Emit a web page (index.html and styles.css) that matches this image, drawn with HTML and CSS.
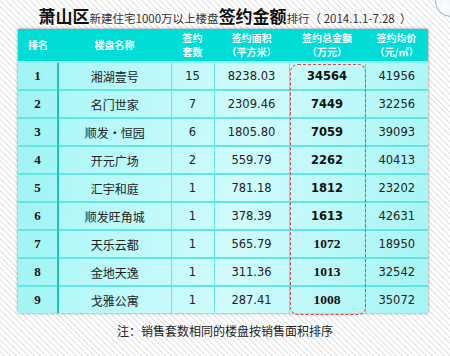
FILE: index.html
```html
<!DOCTYPE html>
<html lang="zh">
<head>
<meta charset="UTF-8" />
<title>萧山区签约金额排行</title>
<link rel="stylesheet" href="styles.css">
</head>
<body>
  <div class="deco"></div>
  <div class="page">
    <h1 class="title">
      <b class="big">萧山区</b><span class="small">新建住宅1000万以上楼盘</span><b class="big">签约金额</b><span class="small">排行（ 2014.1.1-7.28 &nbsp;）</span>
    </h1>

    <div class="board">
      <table class="rank">
        <colgroup>
          <col style="width:40px"><col style="width:113px"><col style="width:43px">
          <col style="width:75px"><col style="width:76px"><col style="width:63px">
        </colgroup>
        <thead>
          <tr>
            <th>排名</th>
            <th>楼盘名称</th>
            <th>签约<br>套数</th>
            <th>签约面积<br>（平方米）</th>
            <th>签约总金额<br>（万元）</th>
            <th>签约均价<br>（元/㎡）</th>
          </tr>
        </thead>
        <tbody>
          <tr><td class="no">1</td><td class="name">湘湖壹号</td><td>15</td><td>8238.03</td><td class="sum">34564</td><td>41956</td></tr>
          <tr><td class="no">2</td><td class="name">名门世家</td><td>7</td><td>2309.46</td><td class="sum">7449</td><td>32256</td></tr>
          <tr><td class="no">3</td><td class="name">顺发·恒园</td><td>6</td><td>1805.80</td><td class="sum">7059</td><td>39093</td></tr>
          <tr><td class="no">4</td><td class="name">开元广场</td><td>2</td><td>559.79</td><td class="sum">2262</td><td>40413</td></tr>
          <tr><td class="no">5</td><td class="name">汇宇和庭</td><td>1</td><td>781.18</td><td class="sum">1812</td><td>23202</td></tr>
          <tr><td class="no">6</td><td class="name">顺发旺角城</td><td>1</td><td>378.39</td><td class="sum">1613</td><td>42631</td></tr>
          <tr><td class="no">7</td><td class="name">天乐云都</td><td>1</td><td>565.79</td><td class="sum serif">1072</td><td>18950</td></tr>
          <tr><td class="no">8</td><td class="name">金地天逸</td><td>1</td><td>311.36</td><td class="sum serif">1013</td><td>32542</td></tr>
          <tr><td class="no">9</td><td class="name">戈雅公寓</td><td>1</td><td>287.41</td><td class="sum serif">1008</td><td>35072</td></tr>
        </tbody>
      </table>
      <div class="mark"></div>
    </div>

    <p class="note">注：销售套数相同的楼盘按销售面积排序</p>
  </div>
</body>
</html>
```

FILE: styles.css
```css
/* 页面底纹 */
body {
  margin: 0;
  width: 450px;
  height: 356px;
  overflow: hidden;
  font-family: "Noto Sans CJK SC", "DejaVu Sans", sans-serif;
  color: #222;
  background: repeating-linear-gradient(45deg, #ffffff 0, #ffffff 2.8px, #e9e9e9 2.8px, #e9e9e9 4.2px);
  position: relative;
}

.deco {
  position: absolute;
  right: -17px;
  top: -15px;
  width: 30px;
  height: 30px;
  border-radius: 50%;
  border: 1px solid #9fb4c8;
  background: radial-gradient(circle at 30% 70%, #ffffff, #cfe2f2);
}

.page {
  display: flex;
  flex-direction: column;
  align-items: center;
}

/* 标题 */
.title {
  display: flex;
  align-items: baseline;
  margin: 0;
  padding-top: 7px;
  height: 22px;
  line-height: 18px;
  font-weight: normal;
  white-space: nowrap;
  color: #111;
}
.title .big {
  font-size: 17px;
  font-weight: 700;
}
.title .small {
  font-size: 11.5px;
  color: #333;
}

/* 表格 */
.board {
  position: relative;
  margin-left: -4px;
  box-shadow: 0 0 3px rgba(0,0,0,0.45);
}

.rank {
  border-collapse: collapse;
  table-layout: fixed;
  width: 410px;
}

.rank th {
  height: 32px;
  padding: 0;
  background: #00dcd6;
  color: #fff;
  font-size: 10px;
  font-weight: 700;
  line-height: 14.5px;
  border-bottom: 2px solid #8ef2ee;
}

.rank tbody {
  background: linear-gradient(100deg, #a6f6f6 0%, #d0fbfb 55%, #a4f5f3 100%);
}

.rank td {
  height: 26px;
  padding: 0;
  text-align: center;
  font-family: "DejaVu Sans", Verdana, sans-serif;
  font-size: 11.5px;
  color: #222;
  border: 1px solid #62e6e4;
  border-top-width: 2px;
}
.rank tr:first-child td {
  border-top: 0;
}
.rank td:first-child { border-left: 0; }
.rank td:last-child { border-right: 0; }
.rank tr:last-child td { border-bottom: 0; }

.rank td.no {
  font-family: "Liberation Serif", serif;
  font-weight: 700;
  font-size: 13px;
  color: #111;
  border-right: 2px solid #16c6bf;
  background: rgba(150,240,240,0.35);
}

.rank td.name {
  font-family: "Noto Sans CJK SC", sans-serif;
  font-size: 12px;
}

.rank td.sum {
  font-weight: 700;
  color: #111;
}
.rank td.serif {
  font-family: "Liberation Serif", serif;
  font-size: 13.5px;
}

/* 红色虚线框 */
.mark {
  position: absolute;
  left: 272px;
  top: 35px;
  width: 74px;
  height: 249px;
  border: 1px dashed #d9494a;
  border-radius: 8px;
}

.note {
  margin: 9px 0 0;
  font-size: 12px;
  color: #222;
}
```
